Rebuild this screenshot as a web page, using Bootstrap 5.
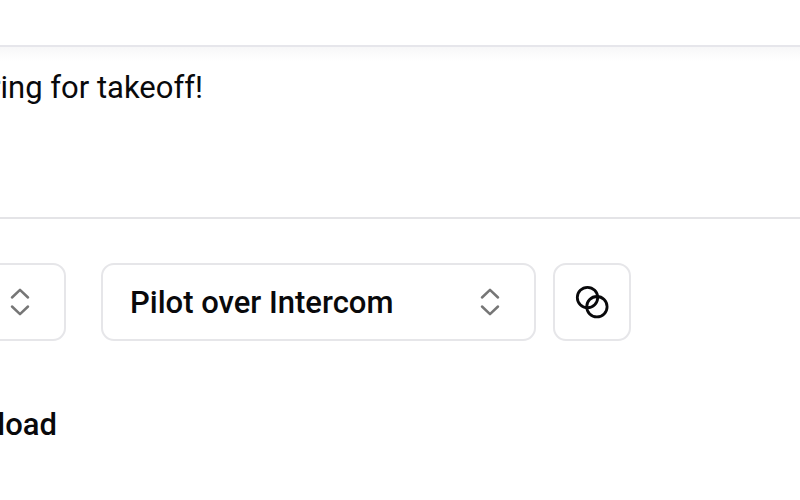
<!DOCTYPE html>
<html lang="en">
<head>
<meta charset="utf-8">
<meta name="viewport" content="width=device-width, initial-scale=1">
<title>Voice editor</title>
<link href="https://cdn.jsdelivr.net/npm/bootstrap@5.3.0/dist/css/bootstrap.min.css" rel="stylesheet">
<style>
body { font-family: Roboto, "Liberation Sans", sans-serif; font-size: 31px; line-height: 40px; color: #09090b; background: #fff; overflow-x: hidden; }
.topbar { height: 47px; border-bottom: 2px solid #e6e6eb; }
.script-area { height: 172px; padding-top: 21px; border-bottom: 2px solid #e4e4e7; background: linear-gradient(#f7f7f8, #fff 14px); }
.tail { display: flex; justify-content: flex-end; overflow: hidden; white-space: nowrap; }
.script-tail { width: 203px; }
.label-tail { width: 57px; margin-top: 64px; font-weight: 500; }
.controls { padding-top: 44px; }
.picker { height: 78px; }
.picker-clipped { width: 66px; overflow: hidden; display: flex; justify-content: flex-end; }
.picker-clipped select { width: 120px; flex: none; }
.picker-voice { width: 435px; margin-left: 35px; margin-right: 17px; }
.picker select, .blend-btn { height: 78px; border: 2px solid #e6e6e9; border-radius: 13px; background: #fff; color: #09090b; }
.picker select { appearance: none; padding: 2px 64px 0 27px; font-weight: 500; }
.picker svg { position: absolute; right: 36px; top: 25px; pointer-events: none; }
.blend-btn { width: 78px; }
</style>
<script src="https://cdn.jsdelivr.net/npm/bootstrap@5.3.0/dist/js/bootstrap.bundle.min.js" defer></script>
</head>
<body>
<header class="topbar"></header>
<main>
  <section class="script-area">
    <div class="tail script-tail"><span>ring for takeoff!</span></div>
  </section>
  <section class="controls">
    <div class="d-flex">
      <div class="picker picker-clipped position-relative">
        <select aria-label="Language"><option></option></select>
        <svg width="20" height="28" viewBox="0 0 20 28" fill="none" stroke="#767676" stroke-width="2.5" stroke-linecap="round" stroke-linejoin="round" aria-hidden="true"><path d="M2 9.5 10 1.8l8 7.7M2 18.5l8 7.7 8-7.7"/></svg>
      </div>
      <div class="picker picker-voice position-relative">
        <select class="w-100" aria-label="Voice"><option>Pilot over Intercom</option></select>
        <svg width="20" height="28" viewBox="0 0 20 28" fill="none" stroke="#767676" stroke-width="2.5" stroke-linecap="round" stroke-linejoin="round" aria-hidden="true"><path d="M2 9.5 10 1.8l8 7.7M2 18.5l8 7.7 8-7.7"/></svg>
      </div>
      <button type="button" class="blend-btn d-flex align-items-center justify-content-center p-0" aria-label="Blend voices">
        <svg width="34" height="34" viewBox="0 0 34 34" fill="none" stroke="#09090b" stroke-width="2.8" aria-hidden="true"><circle cx="12.5" cy="12.5" r="10.2"/><circle cx="21.9" cy="21.7" r="10.2"/></svg>
      </button>
    </div>
    <div class="tail label-tail"><span>load</span></div>
  </section>
</main>
</body>
</html>
